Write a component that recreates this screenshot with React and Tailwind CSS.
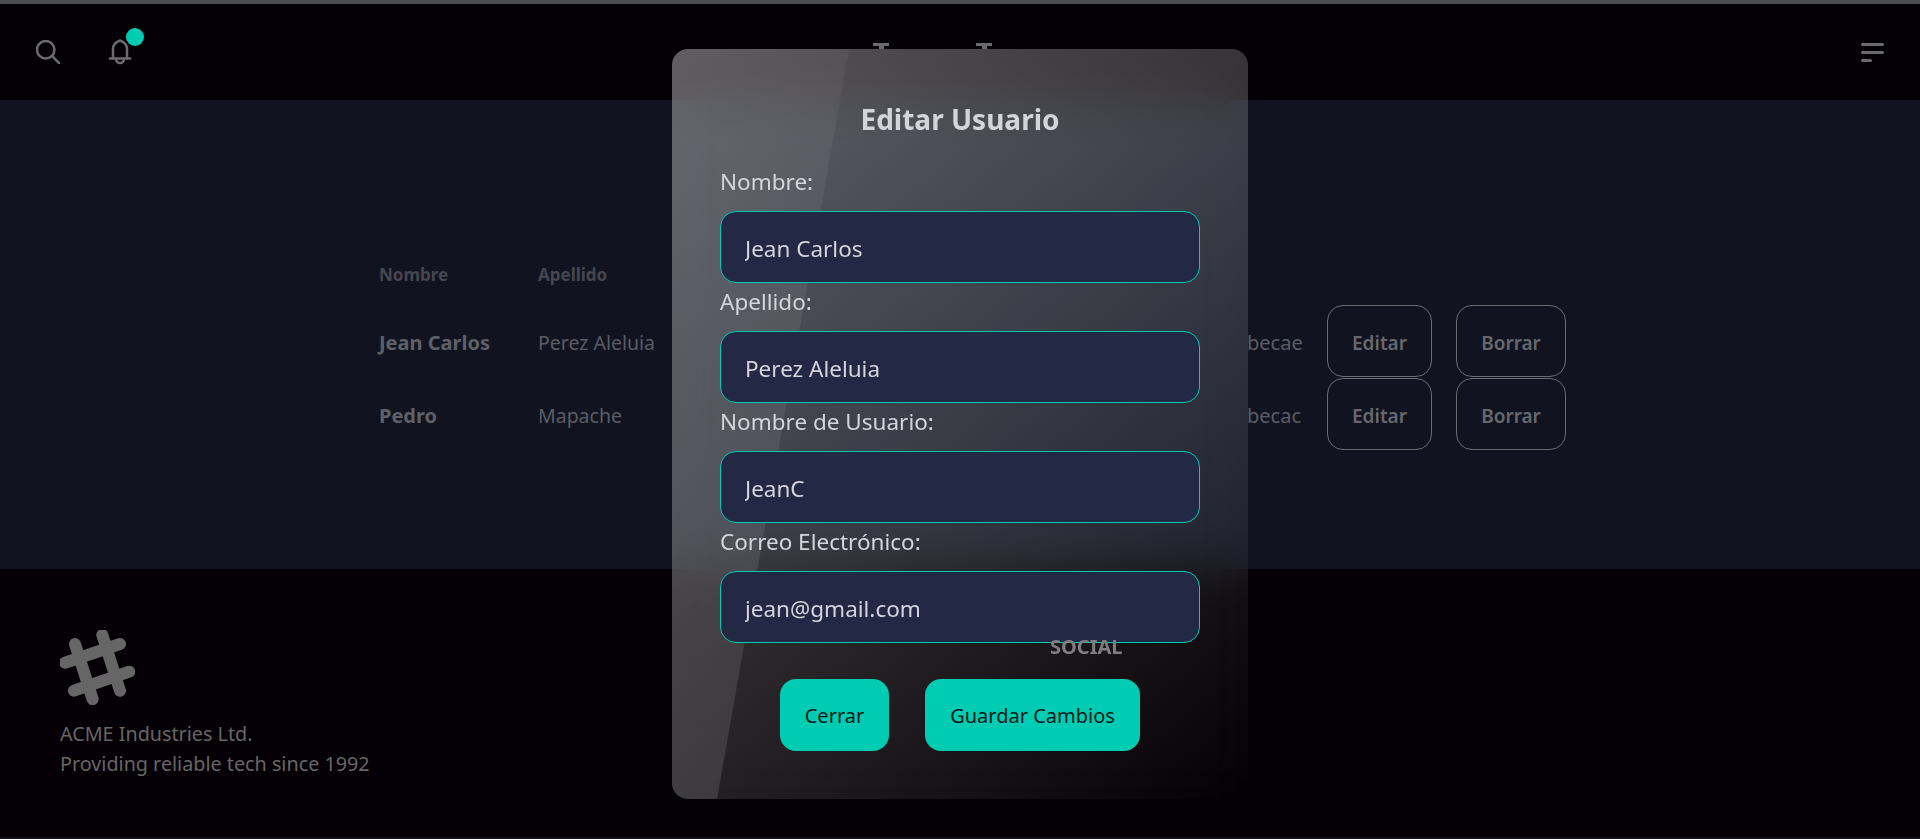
const rows = [
  { nombre: 'Jean Carlos', apellido: 'Perez Aleluia', extra: 'becae' },
  { nombre: 'Pedro', apellido: 'Mapache', extra: 'becac' },
];

const campos = [
  { label: 'Nombre:', value: 'Jean Carlos' },
  { label: 'Apellido:', value: 'Perez Aleluia' },
  { label: 'Nombre de Usuario:', value: 'JeanC' },
  { label: 'Correo Electrónico:', value: 'jean@gmail.com' },
];

function NavT() {
  return (
    <span className="flex flex-col items-center w-4">
      <span className="block w-4 h-[3px] bg-[#6b6b6b]" />
      <span className="block w-[5px] h-[3px] bg-[#6b6b6b]" />
    </span>
  );
}

function Navbar() {
  return (
    <nav className="h-24 bg-[#050005] flex items-center justify-between pl-9 pr-9 relative">
      <div className="flex items-center gap-12">
        <svg className="w-6 h-6 text-[#6b6b6b]" viewBox="0 0 24 24" fill="none" stroke="currentColor" strokeWidth="2.5" strokeLinecap="round">
          <circle cx="9.7" cy="9.7" r="8.7" />
          <path d="M16.2 16.2l6.8 6.8" />
        </svg>
        <div className="relative">
          <svg className="w-6 h-6 text-[#6b6b6b] overflow-visible" viewBox="0 0 24 24" fill="none" stroke="currentColor" strokeWidth="2.5" strokeLinecap="round" strokeLinejoin="round">
            <path d="M5 18V9C5 5 8 2 12 0.5c4 1.5 7 4.500 7 8.500v9" />
            <path d="M2 18.500h20" />
            <path d="M8 19a4 4 0 0 0 8 0" />
          </svg>
          <span className="absolute -top-3 left-[18px] w-[18px] h-[18px] rounded-full bg-[#00ccb4]" />
        </div>
      </div>
      <div className="absolute top-[39px] left-[873px] flex gap-[87px]">
        <NavT />
        <NavT />
      </div>
      <div className="w-[23px] flex flex-col gap-[5px]">
        <span className="block h-[3px] w-full bg-[#6b6b6b] rounded-sm" />
        <span className="block h-[3px] w-full bg-[#6b6b6b] rounded-sm" />
        <span className="block h-[3px] w-[11px] bg-[#6b6b6b] rounded-sm" />
      </div>
    </nav>
  );
}

function Tabla() {
  return (
    <main className="h-[469px] bg-[#111420] pt-[163px] pl-[379px] font-['Noto_Sans',sans-serif]">
      <div className="flex items-center h-6 text-[17px] font-bold text-[#45464f]">
        <div className="w-[159px]">Nombre</div>
        <div>Apellido</div>
      </div>
      <div className="mt-[17px]">
        {rows.map((r) => (
          <div key={r.nombre} className="flex items-center h-[73px] text-[19.500px] text-[#5b5c64]">
            <div className="w-[159px] pt-[5px] text-[20px] font-bold text-[#5f6068]">{r.nombre}</div>
            <div className="w-[709px] pt-[5px]">{r.apellido}</div>
            <div className="w-[80px] pt-[5px] text-[20px]">{r.extra}</div>
            <button className="w-[105px] h-[72px] pt-[6px] rounded-2xl border border-[#6b6c72] text-[19px] font-semibold text-[#67686e]">Editar</button>
            <button className="ml-6 w-[110px] h-[72px] pt-[6px] rounded-2xl border border-[#6b6c72] text-[19px] font-semibold text-[#67686e]">Borrar</button>
          </div>
        ))}
      </div>
    </main>
  );
}

function Footer() {
  return (
    <footer className="h-[268px] bg-[#050005] pl-[60px] pt-[61px] flex relative font-['Noto_Sans',sans-serif]">
      <div>
        <svg className="w-[75px] h-[75px] text-[#666666]" viewBox="0 0 75 75" fill="none" stroke="currentColor" strokeWidth="12" strokeLinecap="round">
          <path d="M15 14l17.700 55.300" />
          <path d="M42.300 5l17.700 55.700" />
          <path d="M5 32.700l55-18.700" />
          <path d="M14 60.700l55.300-19" />
        </svg>
        <p className="mt-[14px] text-[19.750px] leading-[30px] text-[#666666]">
          ACME Industries Ltd.<br />Providing reliable tech since 1992
        </p>
      </div>
      <h6 className="absolute z-30 left-[1050px] top-[68px] text-[20px] font-bold leading-[20px] text-[#807c80]">SOCIAL</h6>
    </footer>
  );
}

function Modal() {
  return (
    <div className="absolute z-20 top-[49px] left-[672px] w-[576px] h-[750px] rounded-2xl overflow-hidden backdrop-blur-xl bg-linear-140 from-white/34 to-white/0 px-12 pt-[48px] font-['Noto_Sans',sans-serif] text-[#d4d4dc]">
      <div className="absolute inset-0 bg-linear-to-b from-white/4 to-white/12 [clip-path:polygon(0_0,177px_0,45px_100%,0_100%)]" />
      <div className="relative">
        <h2 className="text-[28px] font-bold text-center leading-[44px]">Editar Usuario</h2>
        <form className="mt-[22px]">
          {campos.map((c) => (
            <label key={c.label} className="block">
              <span className="block text-[22.500px] leading-[38px] h-12">{c.label}</span>
              <input readOnly value={c.value} className="w-full h-[72px] px-6 pt-[2px] rounded-2xl bg-[#232845] border border-[#00ccb4] text-[22.500px] outline-none" />
            </label>
          ))}
          <div className="flex justify-center gap-9 mt-9">
            <button type="button" className="w-[109px] h-[72px] pt-[2px] rounded-2xl bg-[#00ccb4] text-[20px] text-[#041a17]">Cerrar</button>
            <button type="button" className="w-[215px] h-[72px] pt-[2px] rounded-2xl bg-[#00ccb4] text-[20px] text-[#041a17]">Guardar Cambios</button>
          </div>
        </form>
      </div>
    </div>
  );
}

export default function App() {
  return (
    <div className="relative min-h-[839px] bg-[#111420] overflow-hidden">
      <div className="h-1 bg-[#4a4d4d]" />
      <Navbar />
      <Tabla />
      <Footer />
      <Modal />
    </div>
  );
}
